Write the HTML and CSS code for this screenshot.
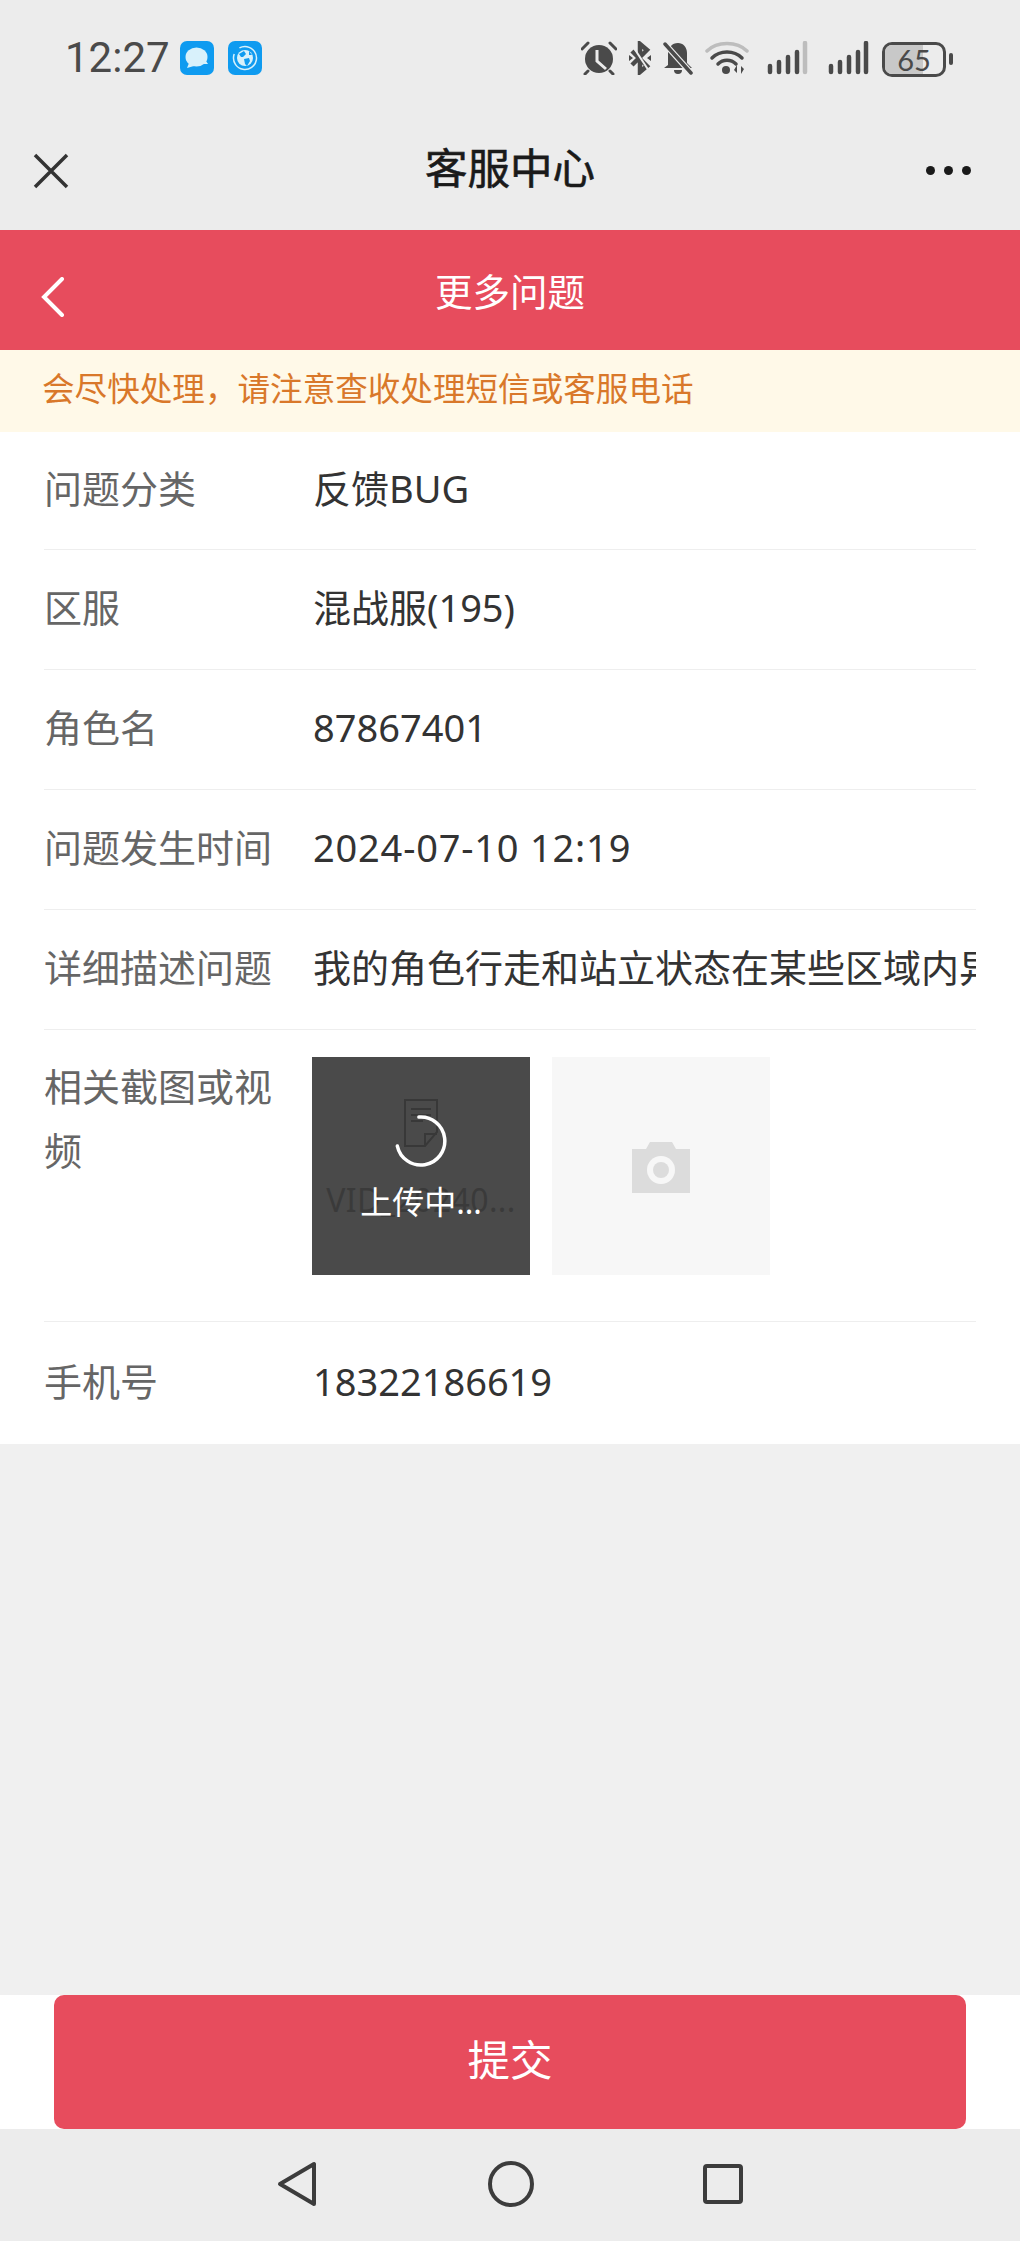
FILE: index.html
```html
<!DOCTYPE html>
<html>
<head>
<title>客服中心</title>
<link rel="stylesheet" href="styles.css">
</head>
<body>
<div class="app">
    <div class="status-bar">
        <span class="time">12:27</span>
        <svg class="app-icon" viewBox="0 0 34 34">
            <rect width="34" height="34" rx="7" fill="#0f9bf0"/>
            <ellipse cx="16.500" cy="16" rx="11" ry="9.500" fill="#d8f1fb"/>
            <path d="M9 22l-2 5 7-2zM26 20l2 3-5 0z" fill="#d8f1fb"/>
        </svg>
        <svg class="app-icon app-icon-globe" viewBox="0 0 34 34">
            <rect width="34" height="34" rx="7" fill="#0f9bf0"/>
            <circle cx="17" cy="17" r="11.500" fill="none" stroke="#d8f1fb" stroke-width="1.500" stroke-dasharray="56 8" transform="rotate(-80 17 17)"/>
            <circle cx="17" cy="17" r="8" fill="#d8f1fb"/>
            <path d="M11 13l5-3 2 3-3 3-2 0zM16 18l5-1 1 3-3 5-2-2zM21 10l3 4-3 0z" fill="#0f9bf0"/>
        </svg>
        <div class="status-right">
            <svg class="st-alarm" viewBox="0 0 36 34" fill="#4a4a4a">
                <circle cx="18" cy="18" r="14"/>
                <path d="M1 8l6-6M35 8l-6-6M7 30l-3 3M29 30l3 3" stroke="#4a4a4a" stroke-width="3" stroke-linecap="round"/>
                <path d="M16 9v11l9 8" fill="none" stroke="#ececec" stroke-width="3"/>
            </svg>
            <svg class="st-bt" viewBox="0 0 24 34" fill="none" stroke="#4a4a4a" stroke-width="4.500">
                <path d="M4 10l15 15-7 6V3l7 6L4 24"/>
                <path d="M1 14l4 3-4 3zM23 14l-4 3 4 3z" fill="#4a4a4a" stroke="none"/>
                <path d="M4 4l17 26" stroke="#ececec" stroke-width="2"/>
            </svg>
            <svg class="st-bell" viewBox="0 0 30 34" fill="#4a4a4a">
                <path d="M15 2c5 0 9 4 9 10v10l5 5H1l4-3V12c0-5 4-10 10-10z"/>
                <path d="M11 29h8a4 4 0 0 1-8 0z"/>
                <path d="M1 2l27 30" stroke="#ececec" stroke-width="6"/>
                <path d="M2 3l26 29" stroke="#4a4a4a" stroke-width="3.500" stroke-linecap="round"/>
            </svg>
            <svg class="st-wifi" viewBox="0 0 44 34" fill="none" stroke-linecap="round">
                <path d="M2 10C12 0 32 0 42 10" stroke="#bdbdbd" stroke-width="3.500"/>
                <path d="M7 17C15 9 29 9 37 17" stroke="#4a4a4a" stroke-width="3.500"/>
                <path d="M13 23C18 18 26 18 31 23" stroke="#4a4a4a" stroke-width="3.500"/>
                <circle cx="21" cy="29" r="4" fill="#4a4a4a"/>
                <path d="M32 24v8l-3-3zM36 33v-8l3 3z" fill="#4a4a4a"/>
            </svg>
            <svg class="st-signal" viewBox="0 0 41 34" stroke-linecap="round" stroke-width="4.500" stroke="#4a4a4a">
                <path d="M3 25v6M12 21v10M21 16v15M30 11v20"/>
                <path d="M38 2v29" stroke="#bdbdbd"/>
            </svg>
            <svg class="st-signal st-signal-full" viewBox="0 0 41 34" stroke-linecap="round" stroke-width="4.500" stroke="#4a4a4a">
                <path d="M3 25v6M12 21v10M21 16v15M30 11v20M38 2v29"/>
            </svg>
            <div class="battery">
                <div class="battery-body"><span class="battery-level"></span><span class="battery-num">65</span></div>
                <span class="battery-nub"></span>
            </div>
        </div>
    </div>

    <div class="nav-bar">
        <svg class="nav-close" viewBox="0 0 36 36"><path d="M2 2l32 32M34 2L2 34" stroke="#333" stroke-width="3.500"/></svg>
        <span class="nav-title">客服中心</span>
        <div class="nav-more"><i></i><i></i><i></i></div>
    </div>

    <div class="header">
        <svg class="back" viewBox="0 0 24 40"><path d="M21 2L3 20l18 18" fill="none" stroke="#fff" stroke-width="4" stroke-linecap="round"/></svg>
        <span class="header-title">更多问题</span>
    </div>

    <div class="notice">会尽快处理，请注意查收处理短信或客服电话</div>

    <div class="form">
        <div class="row row-first"><span class="label">问题分类</span><span class="value">反馈BUG</span></div>
        <div class="row"><span class="label">区服</span><span class="value">混战服(195)</span></div>
        <div class="row"><span class="label">角色名</span><span class="value">87867401</span></div>
        <div class="row"><span class="label">问题发生时间</span><span class="value value-date">2024-07-10 12:19</span></div>
        <div class="row"><span class="label">详细描述问题</span><span class="value">我的角色行走和站立状态在某些区域内异常</span></div>
        <div class="row row-upload">
            <span class="label">相关截图或视频</span>
            <div class="thumbs">
                <div class="thumb thumb-file">
                    <svg class="doc" viewBox="0 0 38 48" fill="none" stroke="#383838" stroke-width="2">
                        <path d="M3 1h32v32L23 47H3z"/>
                        <path d="M9 10h20M9 16h20M9 22h12M23 47V35h12"/>
                    </svg>
                    <span class="file-name">VID_20240...</span>
                    <div class="uploading">
                        <svg class="spinner" viewBox="0 0 54 54"><path d="M27 3a24 24 0 1 1-24 27" fill="none" stroke="#fff" stroke-width="3.500" stroke-linecap="round" transform="rotate(-5 27 27)"/></svg>
                        <span class="uploading-text">上传中...</span>
                    </div>
                </div>
                <div class="thumb thumb-add">
                    <svg class="camera" viewBox="0 0 60 52">
                        <path d="M1 8h14l4-7h22l4 7h14v44H1z" fill="#dcdcdc"/>
                        <circle cx="30" cy="29" r="14" fill="#f7f7f7"/>
                        <circle cx="30" cy="29" r="8" fill="#dcdcdc"/>
                    </svg>
                </div>
            </div>
        </div>
        <div class="row row-last"><span class="label">手机号</span><span class="value">18322186619</span></div>
    </div>

    <div class="spacer"></div>

    <div class="footer"><button class="submit">提交</button></div>

    <div class="sys-nav">
        <svg class="sys-back" viewBox="0 0 40 46"><path d="M37 3v40L3 23z" fill="none" stroke="#3c3c3c" stroke-width="4" stroke-linejoin="round"/></svg>
        <svg class="sys-home" viewBox="0 0 46 46"><circle cx="23" cy="23" r="21" fill="none" stroke="#3c3c3c" stroke-width="4"/></svg>
        <svg class="sys-recent" viewBox="0 0 40 40"><rect x="2" y="2" width="36" height="36" rx="2" fill="none" stroke="#3c3c3c" stroke-width="4"/></svg>
    </div>
</div>
</body>
</html>
```

FILE: styles.css
```css
* {
    box-sizing: border-box;
}

body {
    margin: 0;
    font-family: "Noto Sans", "Noto Sans CJK SC", sans-serif;
    background-color: #f0f0f0;
}

.app {
    width: 1020px;
    height: 2241px;
    display: flex;
    flex-direction: column;
    overflow: hidden;
}

/* status bar */
.status-bar {
    height: 115px;
    background-color: #ececec;
    display: flex;
    align-items: flex-start;
    padding: 41px 67px 0 65px;
}

.time {
    font-family: Roboto, sans-serif;
    font-size: 42px;
    line-height: 34px;
    color: #4a4a4a;
    width: 115px;
    white-space: nowrap;
}

.app-icon {
    width: 34px;
    height: 34px;
}

.app-icon-globe {
    margin-left: 14px;
}

.status-right {
    margin-left: auto;
    display: flex;
    align-items: flex-start;
}

.st-alarm {
    width: 36px;
    height: 34px;
}

.st-bt {
    width: 24px;
    height: 34px;
    margin-left: 11px;
}

.st-bell {
    width: 30px;
    height: 34px;
    margin-left: 11px;
}

.st-wifi {
    width: 44px;
    height: 34px;
    margin-left: 12px;
}

.st-signal {
    width: 41px;
    height: 34px;
    margin-left: 18px;
}

.st-signal-full {
    margin-left: 20px;
}

.battery {
    display: flex;
    align-items: center;
    margin-left: 13px;
    height: 36px;
}

.battery-body {
    position: relative;
    width: 64px;
    height: 35px;
    border: 3px solid #4a4a4a;
    border-radius: 10px;
    overflow: hidden;
    text-align: center;
}

.battery-level {
    position: absolute;
    left: 0;
    top: 0;
    bottom: 0;
    width: 65%;
    background-color: #c8c8c8;
}

.battery-num {
    position: relative;
    font-family: Lato, sans-serif;
    font-size: 29px;
    line-height: 29px;
    color: #4a4a4a;
}

.battery-nub {
    width: 4px;
    height: 12px;
    margin-left: 3px;
    background-color: #4a4a4a;
    border-radius: 2px;
}

/* nav bar */
.nav-bar {
    height: 115px;
    background-color: #ececec;
    display: grid;
    grid-template-columns: 1fr auto 1fr;
    align-items: center;
    padding: 0 40px 4px;
}

.nav-close {
    width: 36px;
    height: 36px;
    margin-left: -7px;
}

.nav-title {
    font-size: 42.500px;
    line-height: 60px;
    padding-bottom: 5px;
    color: #1a1a1a;
    -webkit-text-stroke: 0.6px #1a1a1a;
}

.nav-more {
    display: flex;
    gap: 9px;
    width: 46px;
    margin-right: 8px;
    justify-self: end;
}

.nav-more i {
    width: 9px;
    height: 9px;
    border-radius: 50%;
    background-color: #1a1a1a;
}

/* red header */
.header {
    height: 120px;
    background-color: #e74c5d;
    display: grid;
    grid-template-columns: 1fr auto 1fr;
    align-items: center;
    padding-left: 41px;
}

.back {
    width: 24px;
    height: 40px;
    margin-top: 14px;
    grid-column: 1;
    grid-row: 1;
}

.header-title {
    grid-column: 2;
    grid-row: 1;
    font-size: 37.500px;
    line-height: 50px;
    color: #fff;
    margin-left: -41px;
    padding-top: 4px;
}

.notice {
    height: 82px;
    line-height: 78px;
    padding-left: 42px;
    background-color: #fff9e8;
    color: #d9782a;
    font-size: 32.600px;
    white-space: nowrap;
}

/* form */
.form {
    background-color: #fff;
    padding: 0 44px 0 44px;
}

.row {
    height: 120px;
    display: flex;
    align-items: center;
    border-bottom: 1px solid #eeeeee;
    font-size: 38px;
    line-height: 60px;
    padding-bottom: 5px;
}

.row-first {
    height: 118px;
}

.row-last {
    height: 122px;
    border-bottom: none;
}

.label {
    width: 269px;
    flex-shrink: 0;
    color: #666;
}

.value {
    color: #333;
    white-space: nowrap;
    overflow: hidden;
}

.value-date {
    letter-spacing: 0.8px;
}

.row-upload {
    height: 292px;
    align-items: flex-start;
    padding: 27px 0 0;
}

.row-upload .label {
    width: 232px;
    margin: -3px 37px 0 0;
    line-height: 64px;
}

.thumbs {
    display: flex;
    gap: 22px;
    margin-left: -1px;
}

.thumb {
    position: relative;
    width: 218px;
    height: 218px;
    display: flex;
    flex-direction: column;
    align-items: center;
    overflow: hidden;
}

.thumb-file {
    background-color: #4a4a4a;
    padding-top: 42px;
}

.doc {
    width: 38px;
    height: 48px;
}

.file-name {
    margin-top: 30px;
    font-size: 32px;
    letter-spacing: 0.4px;
    line-height: 46px;
    color: #3a3a3a;
    white-space: nowrap;
}

.uploading {
    position: absolute;
    left: 0;
    top: 57px;
    width: 100%;
    display: flex;
    flex-direction: column;
    align-items: center;
}

.spinner {
    width: 54px;
    height: 54px;
}

.uploading-text {
    margin-top: 11px;
    font-size: 32px;
    line-height: 46px;
    color: #fff;
    white-space: nowrap;
}

.thumb-add {
    background-color: #f7f7f7;
    justify-content: center;
}

.camera {
    width: 60px;
    height: 52px;
    margin-top: 2px;
}

.spacer {
    flex: 1;
    background-color: #f0f0f0;
}

/* submit */
.footer {
    height: 134px;
    background-color: #fff;
    padding: 0 54px;
}

.submit {
    display: block;
    width: 100%;
    height: 134px;
    border: none;
    border-radius: 10px;
    background-color: #e74c5d;
    color: #fff;
    font-family: inherit;
    font-size: 42.500px;
    padding-bottom: 10px;
}

/* android nav */
.sys-nav {
    height: 112px;
    background-color: #ececec;
    display: flex;
    align-items: center;
    justify-content: center;
    padding-bottom: 2px;
}

.sys-back {
    width: 40px;
    height: 46px;
    margin-right: 171px;
}

.sys-home {
    width: 46px;
    height: 46px;
    margin-right: 169px;
}

.sys-recent {
    width: 40px;
    height: 40px;
}
```
